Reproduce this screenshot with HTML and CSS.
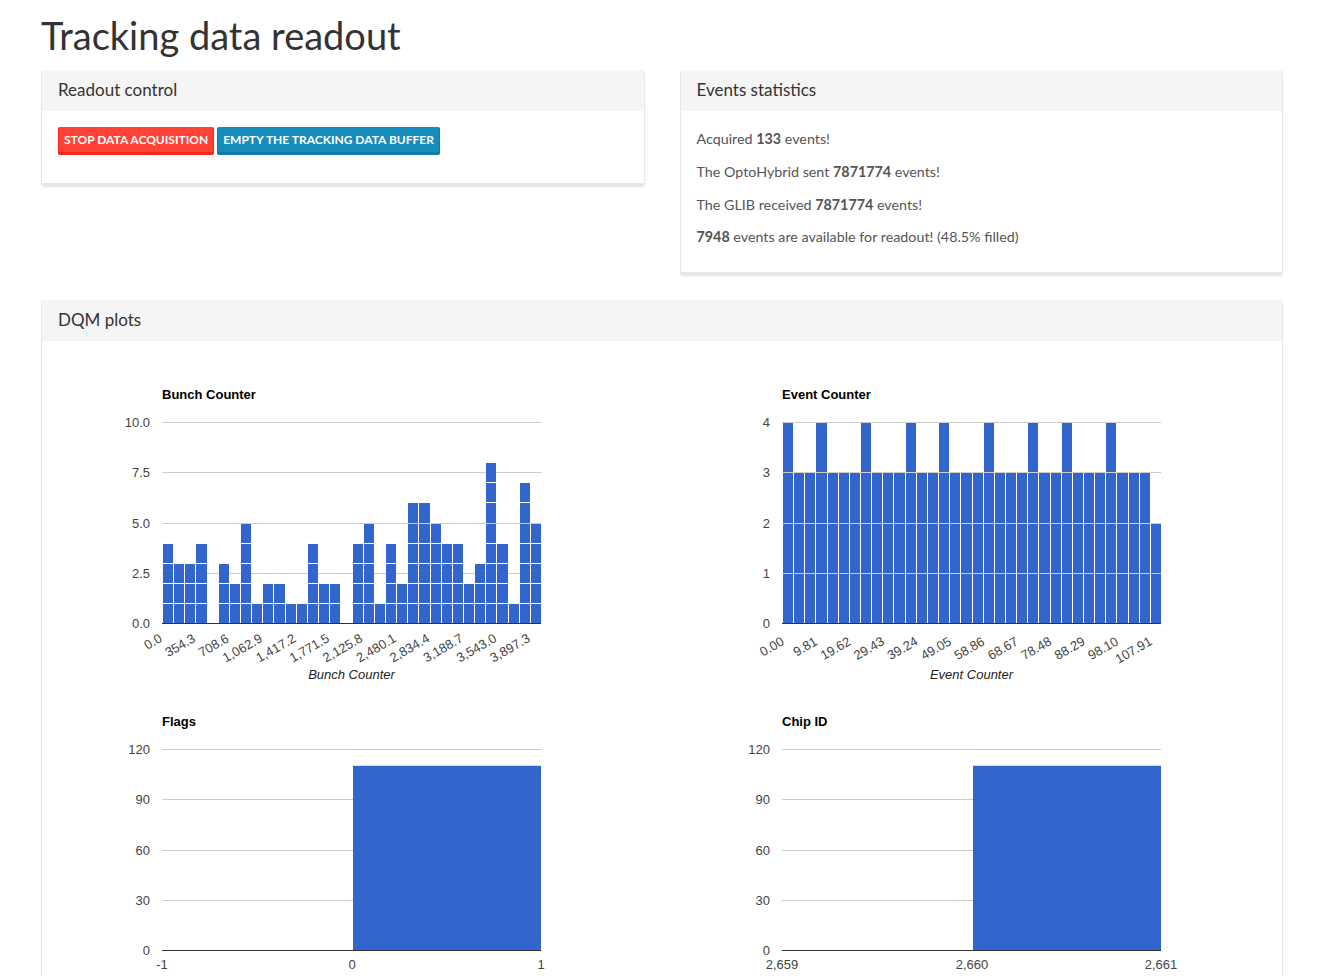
FILE: index.html
```html
<!DOCTYPE html>
<html lang="en">
<head>
<meta charset="utf-8">
<title>Tracking data readout</title>
<link rel="stylesheet" href="styles.css">
</head>
<body>
<div class="page">
  <h1 class="page-title">Tracking data readout</h1>
  <div class="top-row">
    <div class="panel">
      <div class="panel-heading">Readout control</div>
      <div class="panel-body readout-body">
        <button class="btn btn-danger">Stop data acquisition</button>
        <button class="btn btn-primary">Empty the tracking data buffer</button>
      </div>
    </div>
    <div class="panel">
      <div class="panel-heading">Events statistics</div>
      <div class="panel-body stats-body">
        <p>Acquired <b>133</b> events!</p>
        <p>The OptoHybrid sent <b>7871774</b> events!</p>
        <p>The GLIB received <b>7871774</b> events!</p>
        <p><b>7948</b> events are available for readout! (48.5% filled)</p>
      </div>
    </div>
  </div>
  <div class="panel">
    <div class="panel-heading">DQM plots</div>
    <div class="panel-body charts">
      <svg class="chart" id="chart-bc" width="590" height="327"></svg>
      <svg class="chart" id="chart-ec" width="590" height="327"></svg>
      <svg class="chart" id="chart-flags" width="590" height="327"></svg>
      <svg class="chart" id="chart-chip" width="590" height="327"></svg>
    </div>
  </div>
</div>
<script src="charts.js"></script>
</body>
</html>
```

FILE: styles.css
```css
* { box-sizing: border-box; }
body {
  margin: 0;
  background: #fff;
  font-family: Lato, "Open Sans", sans-serif;
  font-size: 14.3px;
  color: #555;
}
.page {
  width: 1242px;
  margin-left: 41px;
}
.page-title {
  font-size: 38px;
  font-weight: 400;
  line-height: 43px;
  margin: 14px 0 13px;
  color: #333;
}
.top-row {
  display: grid;
  grid-template-columns: 1fr 1fr;
  gap: 35px;
  align-items: start;
}
.panel {
  background: #fff;
  border: 1px solid #e7e7e7;
  border-top: 0;
  border-bottom-width: 4px;
  border-radius: 4px;
  margin-bottom: 24px;
  box-shadow: 0 1px 2px rgba(0,0,0,0.04);
}
.panel-heading {
  background: #f5f5f5;
  padding: 10px 16px;
  font-size: 17px;
  line-height: 20px;
  color: #333;
  border-bottom: 1px solid #f5f5f5;
  border-radius: 4px 4px 0 0;
}
.readout-body {
  padding: 16px 16px 28px;
  display: flex;
  gap: 3px;
}
.btn {
  font-family: Lato, "Open Sans", sans-serif;
  font-size: 12px;
  font-weight: 700;
  text-transform: uppercase;
  line-height: 18px;
  color: #fff;
  padding: 4px 5px 3px;
  border-style: solid;
  border-width: 0 1px 3px 1px;
  border-radius: 2px;
  cursor: pointer;
}
.btn-danger {
  background: #ff4136;
  border-color: #f02a1b;
}
.btn-primary {
  background: #158cba;
  border-color: #127ba3;
}
.stats-body {
  padding: 17px 16px 13px;
}
.stats-body p {
  margin: 0 0 10px;
  line-height: 22.75px;
}
.stats-body b {
  font-weight: 700;
}
.charts {
  padding: 15px;
  display: grid;
  grid-template-columns: 590px 590px;
  column-gap: 30px;
}
.chart {
  display: block;
}
.c-title {
  font: bold 13px "Liberation Sans", Arial, sans-serif;
  fill: #000;
}
.c-tick {
  font: 13px "Liberation Sans", Arial, sans-serif;
  fill: #444;
}
.c-axis {
  font: italic 13px "Liberation Sans", Arial, sans-serif;
  fill: #222;
}
.c-grid {
  stroke: #ccc;
  stroke-width: 1;
}
.c-base {
  stroke: #333;
  stroke-width: 1;
}
.c-bar {
  fill: #3366cc;
}
```

FILE: charts.js
```js
(function () {
  var NS = 'http://www.w3.org/2000/svg';
  var L = 105, R = 484, T = 66, B = 267;

  function mk(parent, tag, attrs, text) {
    var e = document.createElementNS(NS, tag);
    for (var k in attrs) e.setAttribute(k, attrs[k]);
    if (text != null) e.textContent = text;
    parent.appendChild(e);
    return e;
  }

  function frame(svg, title, yTicks, yMax) {
    mk(svg, 'text', { x: L, y: 43, 'class': 'c-title' }, title);
    yTicks.forEach(function (t) {
      var y = Math.round(B - (t.v / yMax) * (B - T));
      if (t.v !== 0) {
        mk(svg, 'line', { x1: L, x2: R, y1: y + 0.5, y2: y + 0.5, 'class': 'c-grid' });
      }
      mk(svg, 'text', { x: 93, y: y + 5, 'text-anchor': 'end', 'class': 'c-tick' }, t.label);
    });
  }

  function baseline(svg) {
    mk(svg, 'line', { x1: L, x2: R, y1: B + 0.5, y2: B + 0.5, 'class': 'c-base' });
  }

  function histogram(id, opts) {
    var svg = document.getElementById(id);
    frame(svg, opts.title, opts.yTicks, opts.yMax);
    var n = opts.bins.length;
    var bw = (R - L) / n;
    var u = (B - T) / opts.yMax;
    opts.bins.forEach(function (v, i) {
      var x0 = Math.round(L + i * bw) + 1;
      var x1 = Math.round(L + (i + 1) * bw);
      for (var k = 0; k < v; k++) {
        var y0 = Math.round(B - (k + 1) * u) + 1;
        var y1 = Math.round(B - k * u);
        mk(svg, 'rect', { x: x0, y: y0, width: x1 - x0, height: y1 - y0, 'class': 'c-bar' });
      }
    });
    baseline(svg);
    opts.xLabels.forEach(function (lab, j) {
      var tx = L + j * 3 * bw + opts.labelDx;
      var ty = B + opts.labelDy;
      mk(svg, 'text', {
        x: tx.toFixed(1), y: ty, 'text-anchor': 'end', 'class': 'c-tick',
        transform: 'rotate(-30 ' + tx.toFixed(1) + ' ' + ty + ')'
      }, lab);
    });
    mk(svg, 'text', { x: (L + R) / 2, y: 323, 'text-anchor': 'middle', 'class': 'c-axis' }, opts.axisTitle);
  }

  function single(id, opts) {
    var svg = document.getElementById(id);
    frame(svg, opts.title, opts.yTicks, opts.yMax);
    var mid = Math.round((L + R) / 2);
    var top = B - (opts.value / opts.yMax) * (B - T);
    mk(svg, 'rect', { x: mid + 1, y: top.toFixed(1), width: R - mid - 1, height: (B - top).toFixed(1), 'class': 'c-bar' });
    baseline(svg);
    [L, mid, R].forEach(function (x, j) {
      mk(svg, 'text', { x: x, y: 286, 'text-anchor': 'middle', 'class': 'c-tick' }, opts.xLabels[j]);
    });
  }

  histogram('chart-bc', {
    title: 'Bunch Counter',
    axisTitle: 'Bunch Counter',
    yMax: 10,
    yTicks: [{ v: 10, label: '10.0' }, { v: 7.5, label: '7.5' }, { v: 5, label: '5.0' }, { v: 2.5, label: '2.5' }, { v: 0, label: '0.0' }],
    bins: [4, 3, 3, 4, 0, 3, 2, 5, 1, 2, 2, 1, 1, 4, 2, 2, 0, 4, 5, 1, 4, 2, 6, 6, 5, 4, 4, 2, 3, 8, 4, 1, 7, 5],
    xLabels: ['0.0', '354.3', '708.6', '1,062.9', '1,417.2', '1,771.5', '2,125.8', '2,480.1', '2,834.4', '3,188.7', '3,543.0', '3,897.3'],
    labelDx: 1,
    labelDy: 18
  });

  histogram('chart-ec', {
    title: 'Event Counter',
    axisTitle: 'Event Counter',
    yMax: 4,
    yTicks: [{ v: 4, label: '4' }, { v: 3, label: '3' }, { v: 2, label: '2' }, { v: 1, label: '1' }, { v: 0, label: '0' }],
    bins: [4, 3, 3, 4, 3, 3, 3, 4, 3, 3, 3, 4, 3, 3, 4, 3, 3, 3, 4, 3, 3, 3, 4, 3, 3, 4, 3, 3, 3, 4, 3, 3, 3, 2],
    xLabels: ['0.00', '9.81', '19.62', '29.43', '39.24', '49.05', '58.86', '68.67', '78.48', '88.29', '98.10', '107.91'],
    labelDx: 3,
    labelDy: 21
  });

  var bigTicks = [{ v: 120, label: '120' }, { v: 90, label: '90' }, { v: 60, label: '60' }, { v: 30, label: '30' }, { v: 0, label: '0' }];

  single('chart-flags', {
    title: 'Flags', yMax: 120, yTicks: bigTicks, value: 110,
    xLabels: ['-1', '0', '1']
  });

  single('chart-chip', {
    title: 'Chip ID', yMax: 120, yTicks: bigTicks, value: 110,
    xLabels: ['2,659', '2,660', '2,661']
  });
})();
```
